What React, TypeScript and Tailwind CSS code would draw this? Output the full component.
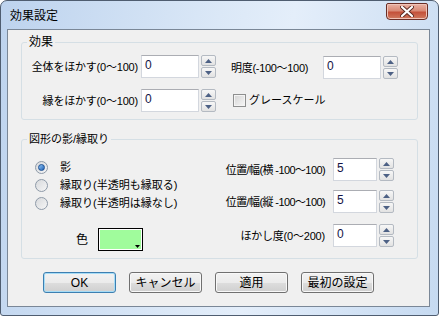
import type {ReactNode} from 'react';

const FONT = "font-['Liberation_Sans','Noto_Sans_CJK_JP',sans-serif]";

function Spin() {
  return (
    <div className="ml-[2px] flex w-[15px] flex-col gap-[1px]">
      <div className="flex h-[11px] items-center justify-center rounded-[2px] border border-[#b4bac2] bg-gradient-to-b from-[#f7f7f7] to-[#e2e2e2]">
        <svg width="7" height="4" viewBox="0 0 7 4"><path d="M3.5 0 L7 4 L0 4 Z" fill="#4d6185" /></svg>
      </div>
      <div className="flex h-[11px] items-center justify-center rounded-[2px] border border-[#b4bac2] bg-gradient-to-b from-[#f7f7f7] to-[#e2e2e2]">
        <svg width="7" height="4" viewBox="0 0 7 4"><path d="M0 0 L7 0 L3.5 4 Z" fill="#4d6185" /></svg>
      </div>
    </div>
  );
}

function NumBox({value, width}: {value: string; width: string}) {
  return (
    <div className="flex items-start">
      <div className={`${width} h-[23px] border border-[#d3d7de] border-t-[#abadb3] bg-white pl-[3px] pt-[1px] text-[12px] leading-[16px] text-[#141446]`}>
        {value}
      </div>
      <Spin />
    </div>
  );
}

// right-aligned label that spills to the left when the font runs wide
function Label({width, children, tight}: {width: string; children: ReactNode; tight?: boolean}) {
  return (
    <div className={`${width} flex justify-end pt-[4px]`}>
      <span className={`whitespace-nowrap ${tight ? 'tracking-[-0.6px]' : 'tracking-[-0.2px]'}`}>{children}</span>
    </div>
  );
}

function Radio({checked, children}: {checked?: boolean; children: ReactNode}) {
  return (
    <div className="flex h-[18px] items-center">
      <div className="flex h-[13px] w-[13px] items-center justify-center rounded-full border border-[#8e9aa8] bg-gradient-to-br from-[#d7d9dc] to-[#f6f6f6]">
        {checked && <div className="h-[7px] w-[7px] rounded-full border border-[#1b4f92] bg-gradient-to-br from-[#8ec3f3] to-[#1d63b8]" />}
      </div>
      <span className="ml-[12px] whitespace-nowrap">{children}</span>
    </div>
  );
}

function Button({children, primary}: {children: ReactNode; primary?: boolean}) {
  return (
    <div
      className={`flex h-[21px] w-[73px] items-center justify-center rounded-[3px] border bg-[linear-gradient(to_bottom,#f2f2f2_0%,#ebebeb_50%,#dddddd_51%,#cfcfcf_100%)] ${
        primary ? 'border-[#3c7fb1] shadow-[inset_0_0_0_1px_#a6dcf6]' : 'border-[#707070] shadow-[inset_0_0_0_1px_#f8f8f8]'
      }`}
    >
      {children}
    </div>
  );
}

export default function App() {
  return (
    <div className={`h-[316px] w-[439px] bg-white text-[11px] leading-[16px] text-black ${FONT}`}>
      <div className="flex h-full flex-col rounded-t-[7px] rounded-b-[3px] border border-[#4f5d70] bg-[linear-gradient(100deg,#bdd3ee_0%,#dbe8f7_45%,#e4eefa_60%,#c6daf1_100%)]">
        <div className="flex h-[28px] shrink-0 items-start">
          <div className="pl-[9px] pt-[7px] text-[12px] leading-[16px] text-black">効果設定</div>
          <div className="ml-auto mr-[10px] mt-[2px] flex h-[17px] w-[42px] items-center justify-center rounded-b-[4px] rounded-t-[2px] border border-[#6a2e26] bg-[linear-gradient(to_bottom,#eab2a4_0%,#d98a76_45%,#c4513a_55%,#d07a5f_100%)] shadow-[inset_0_0_0_1px_#f0c4b8]">
            <svg width="14" height="11" viewBox="0 0 14 11">
              <path d="M2 1 L12 10 M12 1 L2 10" stroke="#5a2a22" strokeWidth="4" strokeLinecap="round" />
              <path d="M2 1 L12 10 M12 1 L2 10" stroke="#ffffff" strokeWidth="2.2" strokeLinecap="round" />
            </svg>
          </div>
        </div>

        <div className="mb-[8px] ml-[6px] mr-[8px] flex-1 border border-[#7a8797] bg-[#f0f0f0]">
          <fieldset className="ml-[13px] mt-[4px] w-[397px] rounded-[3px] border border-[#d5dfe5] p-0">
            <legend className="ml-[5px] px-[2px] text-[12px] leading-[16px]">効果</legend>
            <div className="flex flex-col gap-[10px] pb-[7px] pt-[5px]">
              <div className="flex items-start">
                <Label width="w-[116px]">全体をほかす(0〜100)</Label>
                <div className="ml-[3px]">
                  <NumBox value="0" width="w-[58px]" />
                </div>
                <div className="ml-[15px] w-[90px] whitespace-nowrap pt-[5px] tracking-[-0.3px]">明度(-100〜100)</div>
                <div className="ml-[2px] mt-[1px]">
                  <NumBox value="0" width="w-[58px]" />
                </div>
              </div>
              <div className="flex items-start">
                <Label width="w-[116px]">縁をほかす(0〜100)</Label>
                <div className="ml-[3px]">
                  <NumBox value="0" width="w-[58px]" />
                </div>
                <div className="ml-[17px] mt-[3px] flex items-center">
                  <div className="h-[13px] w-[13px] border border-[#8e8f8f] bg-gradient-to-br from-[#d4d4d4] to-[#f7f7f7] shadow-[inset_0_0_0_1px_#f4f4f4]" />
                  <span className="ml-[3px] whitespace-nowrap">グレースケール</span>
                </div>
              </div>
            </div>
          </fieldset>

          <fieldset className="ml-[13px] mt-[11px] w-[397px] rounded-[3px] border border-[#d5dfe5] p-0">
            <legend className="ml-[5px] px-[2px] leading-[16px]">図形の影/縁取り</legend>
            <div className="flex items-start pb-[7px] pt-[11px]">
              <div className="w-[209px] pl-[13px]">
                <Radio checked>影</Radio>
                <Radio>縁取り(半透明も縁取る)</Radio>
                <Radio>縁取り(半透明は縁なし)</Radio>
                <div className="mt-[16px] flex items-center">
                  <span className="ml-[41px] text-[12px]">色</span>
                  <div className="ml-[10px] flex h-[23px] w-[45px] items-end justify-end border border-black bg-[#a0fc9c] pb-[2px] pr-[2px] shadow-[inset_0_0_0_1px_#ffffff]">
                    <svg width="5" height="3" viewBox="0 0 5 3"><path d="M0 0 L5 0 L2.5 3 Z" fill="#000" /></svg>
                  </div>
                </div>
              </div>
              <div className="flex flex-col">
                <div className="flex items-start">
                  <Label width="w-[94px]" tight>位置/幅(横 -100〜100)</Label>
                  <div className="ml-[8px]">
                    <NumBox value="5" width="w-[44px]" />
                  </div>
                </div>
                <div className="mt-[9px] flex items-start">
                  <Label width="w-[94px]" tight>位置/幅(縦 -100〜100)</Label>
                  <div className="ml-[8px]">
                    <NumBox value="5" width="w-[44px]" />
                  </div>
                </div>
                <div className="mt-[11px] flex items-start">
                  <Label width="w-[94px]">ほかし度(0〜200)</Label>
                  <div className="ml-[8px]">
                    <NumBox value="0" width="w-[44px]" />
                  </div>
                </div>
              </div>
            </div>
          </fieldset>

          <div className="ml-[35px] mt-[13px] flex gap-[13px] text-[12px]">
            <Button primary>OK</Button>
            <Button>キャンセル</Button>
            <Button>適用</Button>
            <Button>最初の設定</Button>
          </div>
        </div>
      </div>
    </div>
  );
}
